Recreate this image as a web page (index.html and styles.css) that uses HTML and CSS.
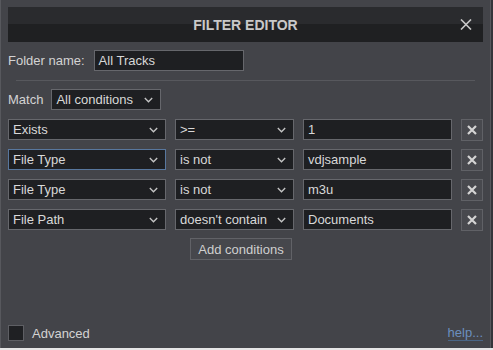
FILE: index.html
```html
<!DOCTYPE html>
<html>
<head>
<meta charset="utf-8">
<link rel="stylesheet" href="styles.css">
</head>
<body>
<div class="dialog">
  <div class="titlebar">
    <span class="title">FILTER EDITOR</span>
    <svg class="close" width="12" height="11" viewBox="0 0 12 11"><path d="M1 0.5 L11 10.5 M11 0.5 L1 10.5" stroke="#c9c9c9" stroke-width="1.6" fill="none"/></svg>
  </div>
  <div class="folder-row">
    <span class="label">Folder name:</span>
    <div class="field folder-input">All Tracks</div>
  </div>
  <div class="sep"></div>
  <div class="match-row">
    <span class="label">Match</span>
    <div class="field select match-select"><span>All conditions</span><svg class="chev" width="9" height="6" viewBox="0 0 9 6"><path d="M0.8 1 L4.5 4.8 L8.2 1" stroke="#c6c6c6" stroke-width="1.3" fill="none"/></svg></div>
  </div>
  <div class="rows">
    <div class="cond">
      <div class="field select c1"><span>Exists</span><svg class="chev" width="9" height="6" viewBox="0 0 9 6"><path d="M0.8 1 L4.5 4.8 L8.2 1" stroke="#c6c6c6" stroke-width="1.3" fill="none"/></svg></div>
      <div class="field select c2"><span>&gt;=</span><svg class="chev" width="9" height="6" viewBox="0 0 9 6"><path d="M0.8 1 L4.5 4.8 L8.2 1" stroke="#c6c6c6" stroke-width="1.3" fill="none"/></svg></div>
      <div class="field c3">1</div>
      <div class="del"><svg width="10" height="10" viewBox="0 0 10 10"><path d="M1 1 L9 9 M9 1 L1 9" stroke="#d4d4d4" stroke-width="2.2" fill="none"/></svg></div>
    </div>
    <div class="cond">
      <div class="field select c1 focused"><span>File Type</span><svg class="chev" width="9" height="6" viewBox="0 0 9 6"><path d="M0.8 1 L4.5 4.8 L8.2 1" stroke="#c6c6c6" stroke-width="1.3" fill="none"/></svg></div>
      <div class="field select c2"><span>is not</span><svg class="chev" width="9" height="6" viewBox="0 0 9 6"><path d="M0.8 1 L4.5 4.8 L8.2 1" stroke="#c6c6c6" stroke-width="1.3" fill="none"/></svg></div>
      <div class="field c3">vdjsample</div>
      <div class="del"><svg width="10" height="10" viewBox="0 0 10 10"><path d="M1 1 L9 9 M9 1 L1 9" stroke="#d4d4d4" stroke-width="2.2" fill="none"/></svg></div>
    </div>
    <div class="cond">
      <div class="field select c1"><span>File Type</span><svg class="chev" width="9" height="6" viewBox="0 0 9 6"><path d="M0.8 1 L4.5 4.8 L8.2 1" stroke="#c6c6c6" stroke-width="1.3" fill="none"/></svg></div>
      <div class="field select c2"><span>is not</span><svg class="chev" width="9" height="6" viewBox="0 0 9 6"><path d="M0.8 1 L4.5 4.8 L8.2 1" stroke="#c6c6c6" stroke-width="1.3" fill="none"/></svg></div>
      <div class="field c3">m3u</div>
      <div class="del"><svg width="10" height="10" viewBox="0 0 10 10"><path d="M1 1 L9 9 M9 1 L1 9" stroke="#d4d4d4" stroke-width="2.2" fill="none"/></svg></div>
    </div>
    <div class="cond">
      <div class="field select c1"><span>File Path</span><svg class="chev" width="9" height="6" viewBox="0 0 9 6"><path d="M0.8 1 L4.5 4.8 L8.2 1" stroke="#c6c6c6" stroke-width="1.3" fill="none"/></svg></div>
      <div class="field select c2"><span>doesn't contain</span><svg class="chev" width="9" height="6" viewBox="0 0 9 6"><path d="M0.8 1 L4.5 4.8 L8.2 1" stroke="#c6c6c6" stroke-width="1.3" fill="none"/></svg></div>
      <div class="field c3">Documents</div>
      <div class="del"><svg width="10" height="10" viewBox="0 0 10 10"><path d="M1 1 L9 9 M9 1 L1 9" stroke="#d4d4d4" stroke-width="2.2" fill="none"/></svg></div>
    </div>
  </div>
  <div class="add-row">
    <div class="add-btn">Add conditions</div>
  </div>
  <div class="spacer"></div>
  <div class="footer">
    <div class="check"></div>
    <span class="label adv">Advanced</span>
    <span class="help">help...</span>
  </div>
</div>
</body>
</html>
```

FILE: styles.css
```css
html, body {
  margin: 0;
  padding: 0;
}
body {
  width: 493px;
  height: 350px;
  background: linear-gradient(#34353a 0, #34353a 348px, #e6e6e6 348px, #e6e6e6 100%);
  font-family: "Liberation Sans", Arial, sans-serif;
  font-size: 13px;
  color: #d2d2d2;
  overflow: hidden;
}
.dialog {
  width: 491px;
  height: 348px;
  box-sizing: border-box;
  background: #434449;
  border-left: 1px solid #57585d;
  border-right: 1px solid #57585d;
  padding: 7px 7px 7px 7px;
  display: flex;
  flex-direction: column;
}
.titlebar {
  height: 35px;
  flex: none;
  background: linear-gradient(#2a2b2e 0, #2a2b2e 50%, #1f2022 50%, #1f2022 100%);
  display: flex;
  align-items: center;
  justify-content: center;
  position: relative;
}
.title {
  font-weight: bold;
  font-size: 14px;
  color: #c9c9c9;
}
.close {
  position: absolute;
  right: 11px;
  top: 12px;
}
.label {
  color: #d3d3d3;
  line-height: 15px;
}
.folder-row {
  margin-top: 8px;
  height: 21px;
  display: flex;
  align-items: center;
}
.field {
  box-sizing: border-box;
  height: 21px;
  background: #1e1f22;
  border: 1px solid #66676c;
  color: #d8d8d8;
  padding: 0 4px;
  display: flex;
  align-items: center;
  white-space: nowrap;
  line-height: 15px;
}
.folder-input {
  margin-left: 9px;
  width: 150px;
}
.sep {
  margin: 9px 8px 0 8px;
  height: 1px;
  background: #57585d;
  flex: none;
}
.match-row {
  margin-top: 8px;
  height: 21px;
  display: flex;
  align-items: center;
}
.select {
  justify-content: space-between;
}
.chev {
  margin-right: 3px;
  flex: none;
}
.match-select {
  margin-left: 8px;
  width: 110px;
}
.rows {
  margin-top: 9px;
  display: flex;
  flex-direction: column;
  gap: 9px;
}
.cond {
  display: flex;
  gap: 9px;
  height: 21px;
}
.c1 { width: 158px; }
.c2 { width: 119px; }
.c3 { width: 149px; }
.focused { border-color: #58779e; }
.del {
  box-sizing: border-box;
  width: 22px;
  height: 22px;
  background: #48494e;
  border: 1px solid #606166;
  display: flex;
  align-items: center;
  justify-content: center;
}
.add-row {
  margin-top: 8px;
  display: flex;
  padding-left: 182px;
}
.add-btn {
  box-sizing: border-box;
  width: 102px;
  height: 22px;
  background: #46474c;
  border: 1px solid #616267;
  display: flex;
  align-items: center;
  justify-content: center;
  color: #cfcfcf;
}
.spacer {
  flex: 1;
}
.footer {
  height: 16px;
  display: flex;
  align-items: center;
}
.check {
  box-sizing: border-box;
  width: 16px;
  height: 16px;
  background: #1f2023;
  border: 1px solid #5e5f64;
}
.adv {
  margin-left: 8px;
}
.help {
  margin-left: auto;
  color: #6b8fbf;
  border-bottom: 1px solid #4a6585;
  line-height: 14px;
}
```
